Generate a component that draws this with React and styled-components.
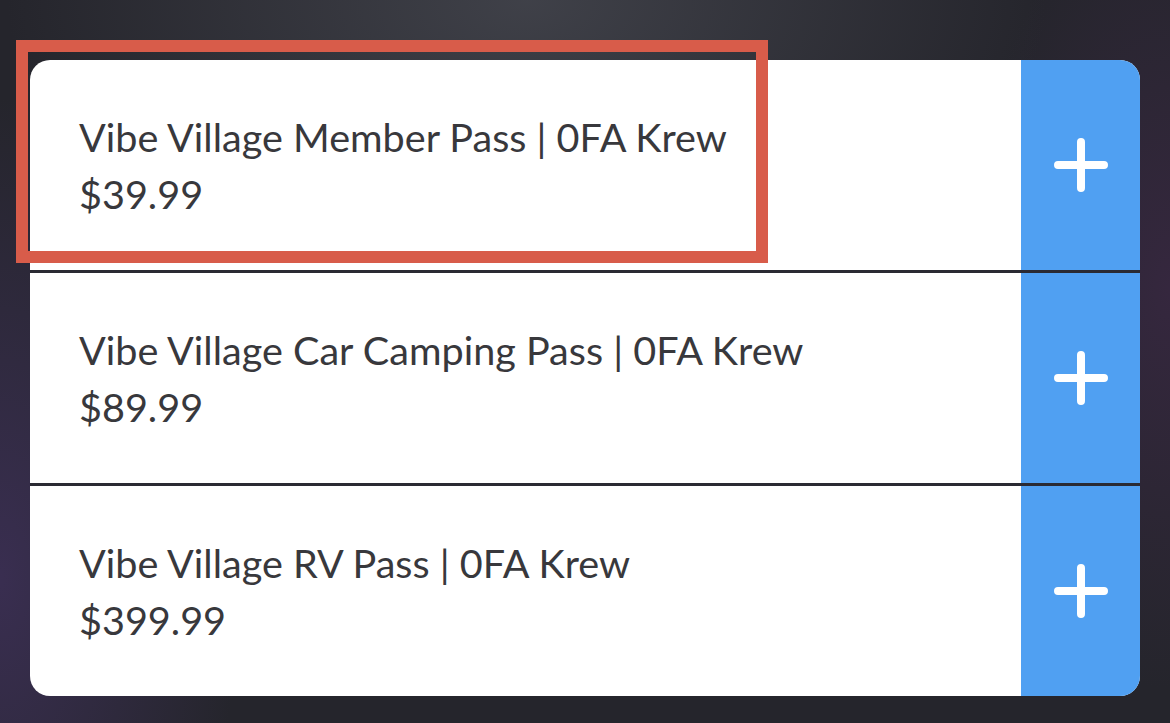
import styled, { createGlobalStyle } from 'styled-components'

const passes = [
    { name: 'Vibe Village Member Pass | 0FA Krew', price: '$39.99' },
    { name: 'Vibe Village Car Camping Pass | 0FA Krew', price: '$89.99' },
    { name: 'Vibe Village RV Pass | 0FA Krew', price: '$399.99' },
]

export default function App() {
    return (
        <>
            <GlobalStyle />
            <Page>
                <Card>
                    {passes.map((p, i) => (
                        <Row key={i} first={i === 0}>
                            <Info>
                                <Name>{p.name}</Name>
                                <Price>{p.price}</Price>
                            </Info>
                            <AddButton aria-label="add">
                                <svg width="54" height="54" viewBox="0 0 54 54">
                                    <path d="M27 4v46M4 27h46" stroke="#fff" strokeWidth="8" strokeLinecap="round" />
                                </svg>
                            </AddButton>
                        </Row>
                    ))}
                    {/* annotation box round the first pass */}
                    <Highlight />
                </Card>
            </Page>
        </>
    )
}

//스타일
const GlobalStyle = createGlobalStyle`
    html, body {
        margin: 0;
        padding: 0;
    }
    body {
        font-family: Lato, "Open Sans", sans-serif;
    }
`

const Page = styled.div`
    width: 1170px;
    height: 723px;
    box-sizing: border-box;
    padding: 60px 30px 0 30px;
    overflow: hidden;
    background:
        radial-gradient(ellipse 520px 300px at 45% 0%, rgba(72, 74, 82, 0.75), transparent),
        radial-gradient(ellipse 240px 480px at 0% 80%, rgba(66, 50, 96, 0.7), transparent),
        radial-gradient(ellipse 200px 400px at 100% 40%, rgba(60, 40, 70, 0.7), transparent),
        #25252c;
`

const Card = styled.div`
    position: relative;
    width: 1110px;
    height: 636px;
    display: flex;
    flex-direction: column;
    background: #fff;
    border-radius: 20px;
`

const Row = styled.div`
    flex: 1;
    display: flex;
    border-top: ${(p) => (p.first ? 'none' : '3px solid #2a2a33')};
    &:first-child > button { border-top-right-radius: 20px; }
    &:nth-child(3) > button { border-bottom-right-radius: 20px; }
    &:first-child { border-top-left-radius: 20px; }
    &:nth-child(3) { border-bottom-left-radius: 20px; }
`

const Info = styled.div`
    flex: 1;
    display: flex;
    flex-direction: column;
    justify-content: center;
    padding-left: 49px;
    color: #38383c;
    font-size: 39.6px;
    line-height: 57px;
`

const Name = styled.div``

const Price = styled.div``

const AddButton = styled.button`
    width: 119px;
    border: none;
    padding: 0;
    background: #50a0f2;
    display: flex;
    align-items: center;
    justify-content: center;
`

const Highlight = styled.div`
    position: absolute;
    left: -14px;
    top: -20px;
    width: 752px;
    height: 223px;
    box-sizing: border-box;
    border: 12px solid #d85c4a;
    pointer-events: none;
`
